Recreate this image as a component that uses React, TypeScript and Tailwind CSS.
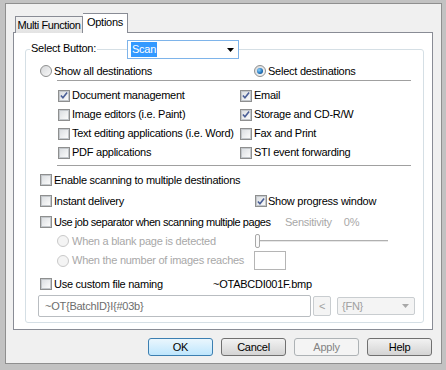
import React from 'react';

const font = { fontFamily: '"Liberation Sans", Arial, sans-serif' };

const Check = ({ checked = false }: { checked?: boolean }) => (
  <span className="w-[12px] h-[12px] shrink-0 border border-[#8e8f8f] bg-[#f4f4f4] flex items-center justify-center">
    <span className="w-[10px] h-[10px] border border-[#c4c8cc] bg-gradient-to-br from-[#dcdfe2] to-[#fbfbfb] flex items-center justify-center">
      {checked && (
        <svg width="9" height="9" viewBox="0 0 9 9">
          <path d="M1 4.5 L3.3 7 L8 1.2" fill="none" stroke="#4a5f97" strokeWidth="1.8" />
        </svg>
      )}
    </span>
  </span>
);

const Radio = ({ selected = false, disabled = false }: { selected?: boolean; disabled?: boolean }) => (
  <span
    className={`w-[12px] h-[12px] shrink-0 rounded-full border flex items-center justify-center ${
      disabled ? 'border-[#c9c9c9] bg-[#f4f4f4]' : 'border-[#8e8f8f] bg-gradient-to-br from-[#d6d8da] to-[#f8f8f8]'
    }`}
  >
    {selected && <span className="w-[6px] h-[6px] rounded-full bg-[radial-gradient(circle_at_35%_35%,#8ad2ff,#1f6fb6_60%,#0d3c6e)]" />}
  </span>
);

const Btn = ({ label, primary, disabled }: { label: string; primary?: boolean; disabled?: boolean }) => (
  <div
    className={`w-[65px] h-[18px] rounded-[3px] border flex items-center justify-center ${
      disabled
        ? 'border-[#adb2b5] bg-[#f4f4f4] text-[#838383]'
        : primary
        ? 'border-[#3c7fb1] bg-gradient-to-b from-[#eaf6fd] to-[#bee6fd] text-black'
        : 'border-[#707070] bg-gradient-to-b from-[#f2f2f2] to-[#d4d4d4] text-black'
    }`}
  >
    {label}
  </div>
);

export default function App() {
  return (
    <div style={font} className="w-[446px] h-[370px] bg-[#c2c2c2] pt-[3px] pl-[5px] pr-[4px] pb-[6px] text-[11px] tracking-[-0.25px] text-black leading-none whitespace-nowrap">
      <div className="h-full border border-[#8f8f8f] bg-[#f0f0f0] pl-[7px] pt-[9px]">
        {/* tabs */}
        <div className="flex items-end h-[20px] ml-[2px] -mb-px relative z-10">
          <div className="w-[68px] h-[17px] border border-b-0 border-[#898c95] bg-gradient-to-b from-[#f2f2f2] to-[#e3e3e3] flex items-center justify-center tracking-[-0.4px]">
            Multi Function
          </div>
          <div className="w-[45px] h-[20px] border border-b-0 border-l-0 border-[#898c95] bg-white flex items-center justify-center pb-[2px]">
            Options
          </div>
        </div>

        {/* panel */}
        <div className="w-[420px] h-[298px] border border-[#898c95] bg-white pl-[11px] pt-[16px]">
          <div className="relative w-[399px] h-[274px] border border-[#d5dfe5] rounded-[3px]">
            <span className="absolute left-[4px] -top-[7px] bg-white px-[1px]">Select Button:</span>
            <div className="absolute left-[101px] -top-[10px] w-[112px] h-[19px] border border-[#7eb4ea] bg-white flex items-center pl-[3px] pr-[4px]">
              <span className="bg-[#3399ff] text-white px-[1px] py-[2px]">Scan</span>
              <svg className="ml-auto" width="7" height="4" viewBox="0 0 7 4">
                <path d="M0 0 H7 L3.5 4 Z" fill="#000" />
              </svg>
            </div>

            <div className="flex items-center h-[18px] mt-[12px] pl-[14px]">
              <div className="w-[214px] flex items-center gap-[2px]">
                <Radio />
                <span>Show all destinations</span>
              </div>
              <div className="flex items-center gap-[2px]">
                <Radio selected />
                <span>Select destinations</span>
              </div>
            </div>

            <div className="h-px bg-[#a0a0a0] ml-[31px] mr-[12px]" />

            <div className="grid grid-cols-[182px_1fr] mt-[5px] pl-[32px]">
              {[
                ['Document management', true, 'Email', true],
                ['Image editors (i.e. Paint)', false, 'Storage and CD-R/W', true],
                ['Text editing applications (i.e. Word)', false, 'Fax and Print', false],
                ['PDF applications', false, 'STI event forwarding', false],
              ].map(([a, ac, b, bc]) => (
                <React.Fragment key={a as string}>
                  <div className="h-[19px] flex items-center gap-[2px]">
                    <Check checked={ac as boolean} />
                    <span>{a as string}</span>
                  </div>
                  <div className="h-[19px] flex items-center gap-[2px]">
                    <Check checked={bc as boolean} />
                    <span>{b as string}</span>
                  </div>
                </React.Fragment>
              ))}
            </div>

            <div className="h-px bg-[#a0a0a0] ml-[31px] mr-[12px] mt-[3px]" />

            <div className="h-[20px] mt-[4px] pl-[14px] flex items-center gap-[2px]">
              <Check />
              <span>Enable scanning to multiple destinations</span>
            </div>

            <div className="h-[20px] mt-[1px] pl-[14px] flex items-center">
              <div className="w-[215px] flex items-center gap-[2px]">
                <Check />
                <span>Instant delivery</span>
              </div>
              <div className="flex items-center gap-[1px]">
                <Check checked />
                <span>Show progress window</span>
              </div>
            </div>

            <div className="h-[20px] mt-[1px] pl-[14px] flex items-center">
              <div className="w-[245px] flex items-center gap-[2px]">
                <Check />
                <span className="tracking-[-0.45px]">Use job separator when scanning multiple pages</span>
              </div>
              <span className="text-[#a8a8a8]">Sensitivity</span>
              <span className="text-[#a8a8a8] ml-[12px]">0%</span>
            </div>

            <div className="h-[18px] pl-[31px] flex items-center">
              <div className="w-[198px] flex items-center gap-[3px] text-[#a8a8a8]">
                <Radio disabled />
                <span>When a blank page is detected</span>
              </div>
              <div className="relative w-[133px] h-[14px] flex items-center">
                <div className="w-full h-[2px] border-t border-[#b0b0b0] bg-[#e7e7e7]" />
                <div className="absolute left-0 top-0 w-[5px] h-[14px] rounded-[2px] border border-[#a8a8a8] bg-[#fafafa]" />
              </div>
            </div>

            <div className="h-[21px] pl-[31px] flex items-center">
              <div className="w-[197px] flex items-center gap-[3px] text-[#a8a8a8]">
                <Radio disabled />
                <span>When the number of images reaches</span>
              </div>
              <div className="w-[32px] h-[19px] border border-[#b5b5b5] bg-white" />
            </div>

            <div className="h-[20px] mt-[3px] pl-[14px] flex items-center">
              <div className="w-[173px] flex items-center gap-[2px]">
                <Check />
                <span>Use custom file naming</span>
              </div>
              <span>~OTABCDI001F.bmp</span>
            </div>

            <div className="h-[22px] mt-[1px] pl-[12px] flex items-center">
              <div className="w-[273px] h-[22px] border border-[#b9bdc1] rounded-[2px] bg-white flex items-center pl-[6px] text-[#6d6d6d]">
                ~OT{'{'}BatchID{'}'}I{'{'}#03b{'}'}
              </div>
              <div className="w-[18px] h-[20px] ml-[2px] border border-[#c9cdd0] rounded-[2px] bg-[#f4f4f4] flex items-center justify-center text-[#a0a0a0]">
                &lt;
              </div>
              <div className="w-[78px] h-[18px] ml-[6px] border border-[#c9cdd0] rounded-[2px] bg-[#f4f4f4] flex items-center pl-[4px] pr-[5px] text-[#a0a0a0]">
                <span>{'{'}FN{'}'}</span>
                <svg className="ml-auto" width="7" height="4" viewBox="0 0 7 4">
                  <path d="M0 0 H7 L3.5 4 Z" fill="#a8a8a8" />
                </svg>
              </div>
            </div>
          </div>
        </div>

        {/* buttons */}
        <div className="w-[420px] flex justify-end gap-[8px] mt-[8px] pr-[1px]">
          <Btn label="OK" primary />
          <Btn label="Cancel" />
          <Btn label="Apply" disabled />
          <Btn label="Help" />
        </div>
      </div>
    </div>
  );
}
